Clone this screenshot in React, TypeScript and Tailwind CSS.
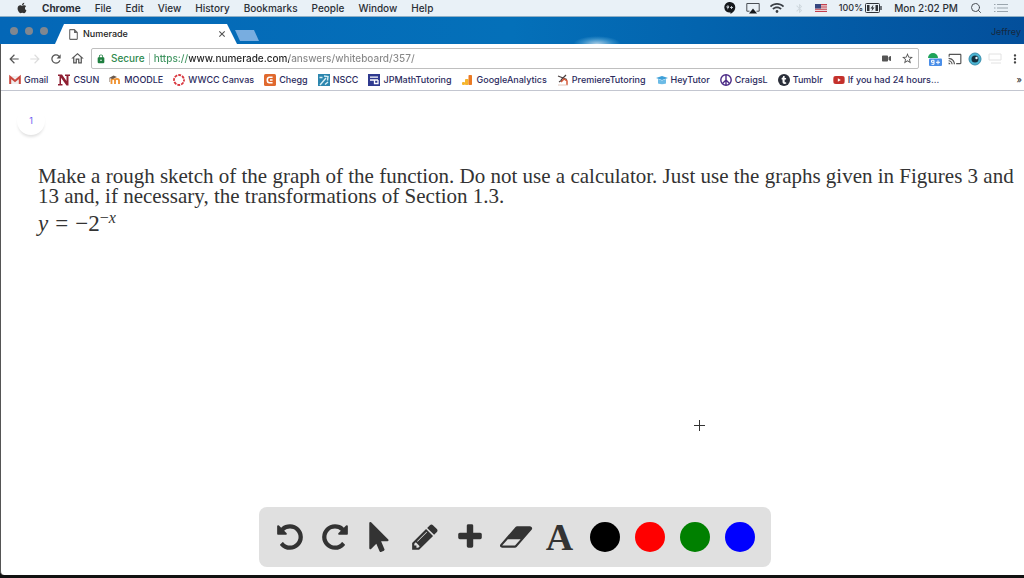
import React from 'react';
import { FaApple, FaWifi, FaVideo, FaYoutube, FaTumblr } from 'react-icons/fa';
import { FiSearch } from 'react-icons/fi';
import { MdCast, MdMoreVert, MdOutlineStarBorder, MdLock, MdArrowBack, MdArrowForward, MdRefresh, MdOutlineHome, MdBluetooth, MdOutlineInsertDriveFile } from 'react-icons/md';

const menus = ['File', 'Edit', 'View', 'History', 'Bookmarks', 'People', 'Window', 'Help'];

const favicon = 'block w-3 h-3 shrink-0';

const bookmarks: { name: string; icon: React.ReactNode }[] = [
  {
    name: 'Gmail',
    icon: (
      <svg viewBox="0 0 12 12" className={favicon}>
        <path d="M1 2h10v8H1z" fill="#f1eeee" />
        <path d="M1.200 10V3l4.800 4 4.800-4v7" fill="none" stroke="#c9473d" strokeWidth="2" />
      </svg>
    ),
  },
  {
    name: 'CSUN',
    icon: (
      <svg viewBox="0 0 12 12" className={favicon}>
        <path d="M0 .5h4l4.500 6.500V2H7V.5h5V2h-1.500v9.500H8.500L3 3.700V10h1.500v1.500H0V10h1.500V2H0z" fill="#8e1f32" />
      </svg>
    ),
  },
  {
    name: 'MOODLE',
    icon: (
      <svg viewBox="0 0 12 12" className={favicon}>
        <path d="M2.500 10V6.500q0-1.700 1.700-1.700T6 6.500V10M6 6.500q0-1.700 2-1.700t2 1.700V10" fill="none" stroke="#f0902c" strokeWidth="1.800" />
        <path d="M0 4l4.500-2.500L8 3 3.500 5z" fill="#6b5b50" />
        <path d="M.7 4v4" stroke="#8a7565" strokeWidth=".7" />
      </svg>
    ),
  },
  {
    name: 'WWCC Canvas',
    icon: (
      <svg viewBox="0 0 12 12" className={favicon}>
        <circle cx="6" cy="6" r="5" fill="none" stroke="#d9363e" strokeWidth="1.800" strokeDasharray="2.900 1.030" strokeDashoffset="1.400" />
      </svg>
    ),
  },
  {
    name: 'Chegg',
    icon: (
      <svg viewBox="0 0 12 12" className={favicon}>
        <rect width="12" height="12" rx="1.500" fill="#e0692e" />
        <path d="M8.600 3.300H5.400Q3.300 3.300 3.300 6t2.100 2.700h3.200M8.600 6H6" fill="none" stroke="#fff" strokeWidth="1.600" />
      </svg>
    ),
  },
  {
    name: 'NSCC',
    icon: (
      <svg viewBox="0 0 12 12" className={favicon}>
        <rect width="12" height="12" fill="#2c86ae" />
        <path d="M2 11L8 4M1.500 3.500h3M6 2l4 .5-.5 4M7 10.500l3-2.500" fill="none" stroke="#d8eef5" strokeWidth="1.400" />
      </svg>
    ),
  },
  {
    name: 'JPMathTutoring',
    icon: (
      <svg viewBox="0 0 12 12" className={favicon}>
        <rect width="12" height="12" fill="#2f3a8f" />
        <path d="M2 3.200h8M2 6h8M6.500 6v3.500H10V6" fill="none" stroke="#fff" strokeWidth="1.300" />
      </svg>
    ),
  },
  {
    name: 'GoogleAnalytics',
    icon: (
      <svg viewBox="0 0 12 12" className={favicon}>
        <rect x="1" y="8" width="3" height="3" rx="1" fill="#f6b52c" />
        <rect x="4" y="5" width="3.500" height="6" rx=".8" fill="#f6b52c" />
        <rect x="7.500" y="1" width="3.500" height="10" rx=".8" fill="#ea7a24" />
      </svg>
    ),
  },
  {
    name: 'PremiereTutoring',
    icon: (
      <svg viewBox="0 0 12 12" className={favicon}>
        <path d="M1 2l9 3.500M4 6l5-5M2 8l3-2" stroke="#4b4040" strokeWidth="1.200" />
        <path d="M4 8l3-3 3 2v4" fill="none" stroke="#d65a3a" strokeWidth="1.500" />
        <path d="M1 11h10" stroke="#d9b7a8" strokeWidth=".8" />
      </svg>
    ),
  },
  {
    name: 'HeyTutor',
    icon: (
      <svg viewBox="0 0 12 12" className={favicon}>
        <path d="M0 4l6-2 6 2-6 2z" fill="#3d9fd8" />
        <path d="M2 5l4 1.500L10 5v4.500q-4 1.500-8 0z" fill="#6cbbe6" />
      </svg>
    ),
  },
  {
    name: 'CraigsL',
    icon: (
      <svg viewBox="0 0 12 12" className={favicon}>
        <path d="M6 1v10M6 6L2.500 9.500M6 6l3.500 3.500" stroke="#4b2a86" strokeWidth="1.400" />
        <circle cx="6" cy="6" r="5.200" fill="none" stroke="#4b2a86" strokeWidth="1.400" />
      </svg>
    ),
  },
  {
    name: 'Tumblr',
    icon: (
      <span className="flex w-3 h-3 items-center justify-center rounded-full bg-[#2b2f3a] text-white">
        <FaTumblr size={8} />
      </span>
    ),
  },
  {
    name: 'If you had 24 hours...',
    icon: <FaYoutube size={12} className="text-[#c4302b]" />,
  },
];

const tools = [
  {
    name: 'Undo',
    box: '0 0 1792 1792',
    path: 'M1664 896q0 156-61 298t-164 245-245 164-298 61q-172 0-327-72.500t-264-204.500q-7-10-6.500-22.500t8.500-20.500l137-138q10-9 25-9 16 2 23 12 73 95 179 147t225 52q104 0 198.500-40.500t163.500-109.500 109.500-163.500 40.500-198.500-40.500-198.500-109.500-163.500-163.500-109.500-198.500-40.500q-98 0-188 35.500t-160 101.500l137 138q31 30 14 69-17 40-59 40h-448q-26 0-45-19t-19-45v-448q0-42 40-59 39-17 69 14l130 129q107-101 244.500-156.500t284.500-55.500q156 0 298 61t245 164 164 245 61 298z',
  },
  {
    name: 'Redo',
    box: '0 0 1792 1792',
    path: 'M1664 256v448q0 26-19 45t-45 19h-448q-42 0-59-40-17-39 14-69l138-138q-148-137-349-137-104 0-198.500 40.500t-163.500 109.500-109.500 163.500-40.500 198.500 40.500 198.500 109.500 163.500 163.500 109.500 198.500 40.500q119 0 225-52t179-147q7-10 23-12 15 0 25 9l137 138q9 8 9.500 20.500t-7.500 22.500q-109 132-264 204.500t-327 72.500q-156 0-298-61t-245-164-164-245-61-298 61-298 164-245 245-164 298-61q147 0 284.500 55.500t244.500 156.500l130-129q29-31 70-14 39 17 39 59z',
  },
  {
    name: 'Select',
    box: '0 0 1792 1792',
    path: 'M1389 1043q31 30 14 69-17 40-59 40h-382l201 476q10 25 0 49t-34 35l-177 75q-25 10-49 0t-35-34l-191-452-312 312q-19 19-45 19-12 0-24-5-40-17-40-59v-1504q0-42 40-59 12-5 24-5 27 0 45 19z',
  },
  {
    name: 'Pencil',
    box: '0 0 1792 1792',
    path: 'M491 1536l91-91-235-235-91 91v107h128v128h107zm523-928q0-22-22-22-10 0-17 7l-542 542q-7 7-7 17 0 22 22 22 10 0 17-7l542-542q7-7 7-17zm-54-192l416 416-832 832h-416v-416zm683 96q0 53-37 90l-166 166-416-416 166-165q36-38 90-38 53 0 91 38l235 234q37 39 37 91z',
  },
  {
    name: 'Add page',
    box: '0 0 1792 1792',
    path: 'M1600 736v192q0 40-28 68t-68 28h-416v416q0 40-28 68t-68 28h-192q-40 0-68-28t-28-68v-416h-416q-40 0-68-28t-28-68v-192q0-40 28-68t68-28h416v-416q0-40 28-68t68-28h192q40 0 68 28t28 68v416h416q40 0 68 28t28 68z',
  },
  {
    name: 'Eraser',
    box: '64 0 1792 1792',
    path: 'M960 1408l336-384h-768l-336 384h768zm1013-1077q15 34 9.500 71.500t-30.500 65.500l-896 1024q-38 44-96 44h-768q-38 0-69.500-20.500t-47.500-54.500q-15-34-9.500-71.500t30.500-65.500l896-1024q38-44 96-44h768q38 0 69.500 20.500t47.500 54.500z',
  },
];

const colors = [
  { name: 'Black', bg: 'bg-black' },
  { name: 'Red', bg: 'bg-[#ff0000]' },
  { name: 'Green', bg: 'bg-[#008000]' },
  { name: 'Blue', bg: 'bg-[#0000ff]' },
];

const MenuBar = () => (
  <header className="flex h-[17px] items-center justify-between bg-[#e9f1f7] px-4 text-[10px] font-medium leading-4 text-[#2b2f36] border-b border-[#8fb0c6]">
    <nav className="flex items-center gap-[14px]">
      <FaApple size={12} className="text-[#333]" />
      <button className="font-bold">Chrome</button>
      {menus.map((m) => (
        <button key={m}>{m}</button>
      ))}
    </nav>
    <div className="flex items-center gap-3">
      <div className="flex items-center gap-[10px]">
        <svg viewBox="0 0 12 12" className="w-3 h-3">
          <path d="M6 0a5.300 5.300 0 0 1 5.300 5.300Q11.300 9.500 6.500 12v-1.500A5.300 5.300 0 1 1 6 0z" fill="#15181c" />
          <path d="M3.200 7q1.800-.5 1.500-3H3v1.500h1.500M6 5.500h3M7.500 4v3" fill="none" stroke="#cdd5db" strokeWidth=".9" />
        </svg>
        <svg viewBox="0 0 14 12" className="w-[14px] h-3">
          <path d="M3.500 9.200H.8V1.500h12.400v7.700h-2.700" fill="none" stroke="#4a4f55" />
          <path d="M7 6.500L11 11.500H3z" fill="#15181c" />
        </svg>
        <FaWifi size={14} className="text-[#3a3f45]" />
        <MdBluetooth size={11} className="text-[#cfd8de]" />
        <svg viewBox="0 0 12 8" className="w-3 h-2">
          <rect width="12" height="8" fill="#e9d9dc" />
          <path d="M0 .6h12M0 3h12M0 5.300h12M0 7.500h12" stroke="#c4404e" strokeWidth="1.100" />
          <rect width="6" height="4.500" fill="#35467f" />
        </svg>
      </div>
      <span className="flex items-center gap-[2px] text-[9px]">
        100%
        <svg viewBox="0 0 17 10" className="w-[17px] h-[10px]">
          <rect x=".5" y=".5" width="14" height="9" rx="1" fill="none" stroke="#30343a" />
          <path d="M16 3v4" stroke="#30343a" strokeWidth="1.300" />
          <path d="M2 2h2.500v6H2zM10.500 2H13v6h-2.500zM8.500 1.500L5.500 5.500h1.700L6.500 8.500l3-4H7.700z" fill="#30343a" />
        </svg>
      </span>
      <span>Mon 2:02 PM</span>
      <FiSearch size={12} className="text-[#4a4f55]" />
      <svg viewBox="0 0 14 10" className="w-[14px] h-[10px]">
        <path d="M0 1.500h1.500M3 1.500h11M0 5h1.500M3 5h11M0 8.500h1.500M3 8.500h11" stroke="#9aa5ad" />
      </svg>
    </div>
  </header>
);

const TabStrip = () => (
  <div className="relative flex h-[27px] items-end justify-between bg-linear-to-r from-[#0467b7] via-[#0470b9] to-[#034f9b] pl-[10px]">
    {/* Wallpaper cloud showing through */}
    <div className="absolute bottom-0 left-[56%] h-2 w-12 bg-[radial-gradient(ellipse_at_bottom,#a9cde6_0%,#2f8ac6_45%,transparent_70%)]"></div>
    <div className="flex items-end">
      <div className="flex items-center gap-[7px] pb-[9px]">
        <button aria-label="Close" className="h-2 w-2 rounded-full bg-[#808790]"></button>
        <button aria-label="Minimize" className="h-2 w-2 rounded-full bg-[#808790]"></button>
        <button aria-label="Zoom" className="h-2 w-2 rounded-full bg-[#808790]"></button>
      </div>
      <div className="ml-[7px] flex h-5 w-[182px] items-center bg-white pl-3 pr-[11px] text-[9px] font-medium text-[#222] [clip-path:polygon(0_100%,9px_0,172px_0,100%_100%)]">
        <MdOutlineInsertDriveFile size={13} className="text-[#666]" />
        <span className="ml-[3px] flex-1">Numerade</span>
        <button aria-label="Close tab">
          <svg viewBox="0 0 8 8" className="w-2 h-2">
            <path d="M1.300 1.300l5.400 5.400M6.700 1.300L1.300 6.700" stroke="#555" strokeWidth="1.100" />
          </svg>
        </button>
      </div>
      <button aria-label="New tab" className="-ml-[2px] mb-[3px] h-[11px] w-6 bg-[#78ade0] [clip-path:polygon(0_0,19px_0,100%_100%,5px_100%)]"></button>
    </div>
    <span className="pb-[6px] pr-[3px] text-[9px] leading-3 text-[#16283f]">Jeffrey</span>
  </div>
);

const AddressBar = () => (
  <div className="flex h-[29px] items-center pl-[6px] pr-[2px]">
    <div className="flex items-center gap-[7px] text-[#555]">
      <button aria-label="Back"><MdArrowBack size={14} /></button>
      <button aria-label="Forward" className="text-[#dcdcdc]"><MdArrowForward size={14} /></button>
      <button aria-label="Reload"><MdRefresh size={14} /></button>
      <button aria-label="Home"><MdOutlineHome size={15} /></button>
    </div>
    <div className="ml-[6px] flex h-[21px] flex-1 items-center rounded-[2px] border border-[#bfbfbf] pl-1 pr-1 text-[10px] font-medium">
      <MdLock size={10} className="text-[#1f7f40]" />
      <label htmlFor="url" className="ml-[5px] mr-1 text-[#2f8a50]">Secure</label>
      <input
        id="url"
        defaultValue="https://www.numerade.com/answers/whiteboard/357/"
        className="h-3 flex-1 border-l border-[#c8c8c8] bg-[linear-gradient(90deg,#3f9460_39px,#222_39px,#222_139px,#888_139px)] bg-clip-text pl-1 text-transparent outline-none"
      />
      <FaVideo size={9} className="text-[#555]" />
      <button aria-label="Bookmark this page" className="ml-[10px] text-[#555]"><MdOutlineStarBorder size={13} /></button>
    </div>
    <div className="ml-2 flex items-center gap-[6px]">
      <svg viewBox="0 0 15 15" className="w-[15px] h-[15px]">
        <path d="M1 7a5 5 0 0 1 10 0z" fill="#1fa35a" />
        <rect x="2" y="7.500" width="13" height="7.500" rx="1" fill="#4a8ee8" />
        <path d="M4.500 9.300h2.500v4H4.500M4.500 9.300v2h2.500M9 11.300h4M11 9.300v4" fill="none" stroke="#fff" />
      </svg>
      <MdCast size={14} className="text-[#555]" />
      <svg viewBox="0 0 14 14" className="w-[14px] h-[14px]">
        <circle cx="7" cy="7" r="6" fill="#4bb4d2" stroke="#3a8fae" />
        <circle cx="7" cy="7" r="3.500" fill="#15303f" />
        <circle cx="8.500" cy="6" r="1.200" fill="#e8f8ff" />
      </svg>
      <svg viewBox="0 0 14 14" className="w-[14px] h-[14px]">
        <path d="M1 2h12v6H1zM3 11h10" fill="none" stroke="#e2e2e2" />
      </svg>
      <button aria-label="More" className="text-[#444]"><MdMoreVert size={14} /></button>
    </div>
  </div>
);

const BookmarksBar = () => (
  <nav className="flex h-[18px] items-center justify-between border-b border-[#c3c6d0] pb-1 pl-2 pr-[2px] text-[9px] font-medium leading-3 text-[#2c2b5e]">
    <div className="flex items-center gap-[10px]">
      {bookmarks.map((b) => (
        <a key={b.name} href="#" className="flex items-center gap-[3px] whitespace-nowrap">
          {b.icon}
          {b.name}
        </a>
      ))}
    </div>
    <button aria-label="More bookmarks" className="text-[#333]">»</button>
  </nav>
);

const Toolbar = () => (
  <div className="flex h-[60px] items-center gap-[15px] rounded-lg bg-[#e0e0e0] px-4 text-[#333]">
    {tools.map((t) => (
      <button key={t.name} aria-label={t.name} className="h-[30px] w-[30px]">
        <svg viewBox={t.box} className="h-[30px] w-[30px] overflow-visible" fill="currentColor">
          <path d={t.path} />
        </svg>
      </button>
    ))}
    <button aria-label="Text" className="flex h-[30px] w-[30px] items-center justify-center font-['Liberation_Serif',serif] text-[38px] font-bold leading-[30px]">A</button>
    {colors.map((c) => (
      <button key={c.name} aria-label={c.name} className={`h-[30px] w-[30px] rounded-full ${c.bg}`}></button>
    ))}
  </div>
);

const App: React.FC = () => {
  return (
    <div className="flex min-h-screen flex-col bg-[#111] font-['Inter',sans-serif]">
      <MenuBar />
      <TabStrip />
      <div className="flex flex-1 flex-col rounded-bl border-l border-[#555] bg-white mb-[3px]">
        <AddressBar />
        <BookmarksBar />
        <main className="relative flex flex-1 flex-col pt-4">
          <button className="ml-4 flex h-7 w-7 items-center justify-center rounded-full bg-white text-[9px] text-[#6a5cf0] shadow-[0_3px_3px_-1px_rgba(0,0,0,0.12)]">1</button>
          <section className="mt-[31px] pl-[37px] pr-1 font-['Liberation_Serif',serif] text-[21px] leading-5 text-[#333]">
            <p>Make a rough sketch of the graph of the function. Do not use a calculator. Just use the graphs given in Figures 3 and 13 and, if necessary, the transformations of Section 1.3.</p>
            <p className="mt-2 flex gap-[7px] text-[23px]">
              <i>y</i>
              <span>=</span>
              <span>−2<sup className="text-[16px]">−<i>x</i></sup></span>
            </p>
          </section>
          {/* Crosshair pointer on the drawing canvas */}
          <svg viewBox="0 0 11 11" className="absolute left-[693px] top-[329px] w-[11px] h-[11px]">
            <path d="M5.500 0v11M0 5.500h11" stroke="#333" />
          </svg>
          <div className="mt-auto flex justify-center pb-2 pl-1">
            <Toolbar />
          </div>
        </main>
      </div>
    </div>
  );
};

export default App;
